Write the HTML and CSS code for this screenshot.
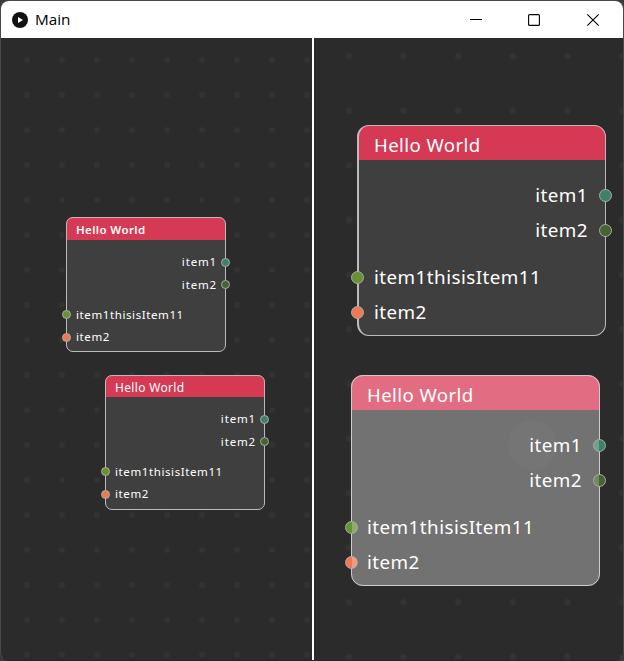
FILE: index.html
```html
<!DOCTYPE html>
<html lang="en">
<head>
<meta charset="utf-8">
<title>Main</title>
<link rel="stylesheet" href="styles.css">
</head>
<body>
<div class="window">
  <header class="titlebar">
    <svg class="logo" width="16" height="16" viewBox="0 0 16 16"><circle cx="8" cy="8" r="8" fill="#111"/><path d="M6 5l5 3-5 3z" fill="#fff"/></svg>
    <span class="title">Main</span>
    <svg class="controls" width="130" height="14" viewBox="0 0 130 14" fill="none" stroke="#000" stroke-width="1.1">
      <path d="M0 6.5h12"/><rect x="58.6" y="1.6" width="10.8" height="10.8" rx="1"/><path d="M117.3 1.3l11.4 11.4M128.7 1.3l-11.4 11.4"/>
    </svg>
  </header>
  <main class="panes">
    <section class="pane pane-left">
      <article class="node small node-a">
        <h2 class="head">Hello World</h2>
        <div class="outputs">
          <div class="row"><span class="label">item1</span><i class="port teal"></i></div>
          <div class="row"><span class="label">item2</span><i class="port forest"></i></div>
        </div>
        <div class="inputs">
          <div class="row"><i class="port lime"></i><span class="label">item1thisisItem11</span></div>
          <div class="row"><i class="port coral"></i><span class="label">item2</span></div>
        </div>
      </article>
      <article class="node small node-b">
        <h2 class="head">Hello World</h2>
        <div class="outputs">
          <div class="row"><span class="label">item1</span><i class="port teal"></i></div>
          <div class="row"><span class="label">item2</span><i class="port forest"></i></div>
        </div>
        <div class="inputs">
          <div class="row"><i class="port lime"></i><span class="label">item1thisisItem11</span></div>
          <div class="row"><i class="port coral"></i><span class="label">item2</span></div>
        </div>
      </article>
    </section>
    <section class="pane pane-right">
      <article class="node large node-c">
        <h2 class="head">Hello World</h2>
        <div class="outputs">
          <div class="row"><span class="label">item1</span><i class="port teal"></i></div>
          <div class="row"><span class="label">item2</span><i class="port forest"></i></div>
        </div>
        <div class="inputs">
          <div class="row"><i class="port lime"></i><span class="label">item1thisisItem11</span></div>
          <div class="row"><i class="port coral"></i><span class="label">item2</span></div>
        </div>
      </article>
      <article class="node large node-d hover">
        <h2 class="head">Hello World</h2>
        <i class="ripple"></i>
        <div class="outputs">
          <div class="row"><span class="label">item1</span><i class="port teal"></i></div>
          <div class="row"><span class="label">item2</span><i class="port forest"></i></div>
        </div>
        <div class="inputs">
          <div class="row"><i class="port lime"></i><span class="label">item1thisisItem11</span></div>
          <div class="row"><i class="port coral"></i><span class="label">item2</span></div>
        </div>
      </article>
    </section>
  </main>
</div>
</body>
</html>
```
FILE: styles.css
```css
* { box-sizing: border-box; }
body { margin: 0; background: #3b3b3c; }
.window {
  width: 624px; height: 661px; overflow: hidden;
  display: flex; flex-direction: column;
  border: 1px solid #494949; border-bottom-color: #292325; border-radius: 9px;
  background: #2b2b2b;
  font-family: "Noto Sans", sans-serif;
}
.titlebar {
  height: 37px; flex: none; display: flex; align-items: center;
  padding: 0 23px 0 11px; background: #fff; color: #000;
}
.title { margin-left: 7px; font: 15.3px/20px "Open Sans", sans-serif; padding-bottom: 1px; }
.controls { margin-left: auto; }
.panes { flex: 1; display: flex; }
.pane { position: relative; background-color: #2b2b2b; }
.pane-left {
  width: 311px;
  background-image: radial-gradient(circle at 17.5px 17.5px, #333 2.7px, transparent 3.3px);
  background-size: 35px 35px; background-position: 8.5px 4.5px;
}
.pane-right {
  flex: 1; border-left: 2px solid #fff;
  background-image: radial-gradient(ellipse at 27.3px 27.3px, #333 2.9px, transparent 3.5px);
  background-size: 54.6px 54.6px; background-position: 7.7px -9px;
}
.node {
  position: absolute; display: flex; flex-direction: column;
  background: #3f3f3f; color: #fff;
}
.node::after {
  content: ""; position: absolute; inset: 0; border: 1.4px solid #bbb;
  border-radius: inherit; pointer-events: none;
}
.head { margin: 0; font-weight: 400; background: #d63954; white-space: nowrap; }
.row { position: relative; display: flex; align-items: center; white-space: nowrap; }
.outputs .row { justify-content: flex-end; }
.port { position: absolute; z-index: 2; border: 1px solid #aaa; border-radius: 50%; }
.teal { background: #3d8267; }
.forest { background: #456333; }
.lime { background: #67932f; }
.coral { background: #f17853; }

.small { width: 160px; height: 135px; border-radius: 7px; }
.small .head {
  height: 23px; padding: 2px 0 0 10px; border-radius: 7px 7px 0 0;
  font-size: 12px; line-height: 22px; letter-spacing: .33px;
}
.small .outputs { padding-top: 10.5px; }
.small .inputs { padding-top: 7.5px; }
.small .row { height: 22.5px; padding: 0 9px 0 10px; font-size: 11.5px; letter-spacing: .6px; }
.small .outputs .label { letter-spacing: .85px; }
.small .port { width: 9px; height: 9px; top: 7px; }
.small .outputs .port { right: -4px; }
.small .inputs .port { left: -4px; }
.node-a { left: 65px; top: 179px; }
.node-a .head { font-size: 11.5px; font-weight: 600; letter-spacing: .38px; padding-top: 2px; }
.node-b { left: 104px; top: 337px; }
.node-b .head { height: 22px; }

.large { width: 249px; height: 211px; border-radius: 12px; }
.large .head {
  height: 35px; padding: 1px 0 0 16px; border-radius: 12px 12px 0 0;
  font-size: 18.6px; line-height: 37px; letter-spacing: .42px;
}
.large .outputs { padding-top: 17px; }
.large .inputs { padding-top: 11.6px; }
.large .row { height: 35.4px; padding: 0 18px 0 16px; font-size: 18.8px; letter-spacing: .46px; }
.large .port { width: 13px; height: 13px; top: 11.5px; }
.large .outputs .port { right: -6px; }
.large .inputs .port { left: -6px; }
.node-c { left: 43px; top: 87px; }
.node-c .head, .node-c .inputs .row { padding-left: 17px; }
.node-c::after { border-left-width: 2px; }
.node-d { left: 37px; top: 337px; }

.hover { background: #727272; }
.hover .head { background: #e26d82; }
.hover::after { border-color: #ccc; }
.ripple {
  position: absolute; left: 157px; top: 45px; width: 49px; height: 50px;
  border-radius: 50%; background: #757575;
}
.hover .teal { background: linear-gradient(90deg, #6ea28d 50%, #3d8267 50%); }
.hover .forest { background: linear-gradient(90deg, #748967 50%, #456333 50%); }
.hover .lime { background: linear-gradient(90deg, #67932f 50%, #8eae66 50%); }
.hover .coral { background: linear-gradient(90deg, #f17853 50%, #f59b80 50%); }
```
